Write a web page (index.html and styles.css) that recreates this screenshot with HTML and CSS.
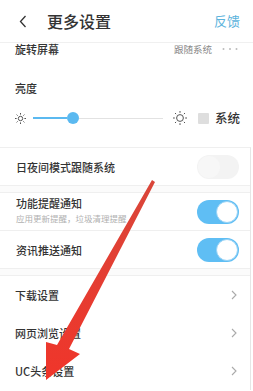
FILE: index.html
```html
<!DOCTYPE html>
<html>
    <head>
        <meta charset="utf-8">
        <title>更多设置</title>
        <meta name="viewport" content="width=device-width, initial-scale=1.0" />
        <link rel="stylesheet" href="styles.css">
    </head>
    <body>
        <div class="page">
            <div class="topbar">
                <span class="back">
                    <svg width="8" height="13" viewBox="0 0 8 13"><polyline points="6.5,1 1.5,6.5 6.5,12" fill="none" stroke="#333" stroke-width="1.3"/></svg>
                </span>
                <span class="title">更多设置</span>
                <span class="feedback">反馈</span>
            </div>

            <div class="rotate">
                <span class="label">旋转屏幕</span>
                <span class="value">跟随系统</span>
                <svg class="more" width="16" height="12" viewBox="0 0 16 12">
                    <circle cx="1.5" cy="6" r="1" fill="#bbb"/>
                    <circle cx="8" cy="6" r="1" fill="#bbb"/>
                    <circle cx="14.5" cy="6" r="1" fill="#bbb"/>
                </svg>
            </div>

            <div class="bright">
                <div class="label">亮度</div>
                <div class="slider_row">
                    <svg class="sun_small" width="11" height="11" viewBox="0 0 11 11">
                        <circle cx="5.5" cy="5.5" r="2.2" fill="none" stroke="#555" stroke-width="1"/>
                        <g stroke="#555" stroke-width="1">
                            <line x1="5.5" y1="0" x2="5.5" y2="1.6"/>
                            <line x1="5.5" y1="9.4" x2="5.5" y2="11"/>
                            <line x1="0" y1="5.5" x2="1.6" y2="5.5"/>
                            <line x1="9.4" y1="5.5" x2="11" y2="5.5"/>
                            <line x1="1.6" y1="1.6" x2="2.6" y2="2.6"/>
                            <line x1="8.4" y1="8.4" x2="9.4" y2="9.4"/>
                            <line x1="1.6" y1="9.4" x2="2.6" y2="8.4"/>
                            <line x1="8.4" y1="2.6" x2="9.4" y2="1.6"/>
                        </g>
                    </svg>
                    <div class="track">
                        <div class="fill"></div>
                        <div class="thumb"></div>
                        <div class="rest"></div>
                    </div>
                    <svg class="sun_big" width="14" height="14" viewBox="0 0 14 14">
                        <circle cx="7" cy="7" r="3.4" fill="none" stroke="#555" stroke-width="1"/>
                        <g stroke="#555" stroke-width="1">
                            <line x1="7" y1="0" x2="7" y2="1.8"/>
                            <line x1="7" y1="12.2" x2="7" y2="14"/>
                            <line x1="0" y1="7" x2="1.8" y2="7"/>
                            <line x1="12.2" y1="7" x2="14" y2="7"/>
                            <line x1="2" y1="2" x2="3.1" y2="3.1"/>
                            <line x1="10.9" y1="10.9" x2="12" y2="12"/>
                            <line x1="2" y1="12" x2="3.1" y2="10.9"/>
                            <line x1="10.9" y1="3.1" x2="12" y2="2"/>
                        </g>
                    </svg>
                    <span class="check"></span>
                    <span class="sys">系统</span>
                </div>
            </div>

            <div class="list">
                <div class="row">
                    <span class="label">日夜间模式跟随系统</span>
                    <span class="switch off"><span class="knob"></span></span>
                </div>
                <div class="gap"></div>
                <div class="row">
                    <div class="two_line">
                        <div class="label">功能提醒通知</div>
                        <div class="sub">应用更新提醒，垃圾清理提醒</div>
                    </div>
                    <span class="switch on"><span class="knob"></span></span>
                </div>
                <div class="row">
                    <span class="label">资讯推送通知</span>
                    <span class="switch on"><span class="knob"></span></span>
                </div>
                <div class="gap"></div>
                <div class="row link">
                    <span class="label">下载设置</span>
                    <svg class="chev" width="6" height="10" viewBox="0 0 6 10"><polyline points="1,1 5,5 1,9" fill="none" stroke="#aaa" stroke-width="1.1"/></svg>
                </div>
                <div class="row link">
                    <span class="label">网页浏览设置</span>
                    <svg class="chev" width="6" height="10" viewBox="0 0 6 10"><polyline points="1,1 5,5 1,9" fill="none" stroke="#aaa" stroke-width="1.1"/></svg>
                </div>
                <div class="row link">
                    <span class="label">UC头条设置</span>
                    <svg class="chev" width="6" height="10" viewBox="0 0 6 10"><polyline points="1,1 5,5 1,9" fill="none" stroke="#aaa" stroke-width="1.1"/></svg>
                </div>
            </div>

            <!-- red arrow drawn over the list -->
            <svg class="arrow" width="253" height="391" viewBox="0 0 253 391">
                <defs>
                    <linearGradient id="red" x1="0" y1="0" x2="0" y2="1">
                        <stop offset="0" stop-color="#d9463a"/>
                        <stop offset="1" stop-color="#f0352a"/>
                    </linearGradient>
                </defs>
                <polygon points="152,180 155,182 69,349 80,354 46,380 46,342 57,345" fill="url(#red)"/>
            </svg>
        </div>
    </body>
</html>
```

FILE: styles.css
```css
body {
    margin: 0;
    background: #fff;
    font-family: "Noto Sans CJK SC", "Noto Sans", sans-serif;
    color: #333;
}
.page {
    position: relative;
    width: 253px;
    height: 391px;
    overflow: hidden;
}
.topbar {
    display: flex;
    align-items: center;
    height: 42px;
    border-bottom: 1px solid #f0f0f0;
}
.back {
    display: flex;
    margin-left: 19px;
}
.title {
    margin-left: 20px;
    font-size: 16px;
    font-weight: 500;
    line-height: 20px;
    color: #333;
}
.feedback {
    margin-left: auto;
    margin-right: 13px;
    font-size: 13px;
    line-height: 18px;
    color: #5cb3dc;
}
.rotate {
    display: flex;
    align-items: flex-start;
    height: 30px;
    padding: 0 15px 0 15px;
}
.rotate .label {
    font-size: 11px;
    font-weight: 500;
    line-height: 12px;
}
.rotate .value {
    margin-left: auto;
    font-size: 9.5px;
    line-height: 12px;
    color: #888;
}
.rotate .more {
    margin-left: 10px;
}
.bright {
    padding: 8px 0 17px 0;
}
.bright .label {
    padding-left: 15px;
    font-size: 11px;
    font-weight: 500;
    line-height: 14px;
}
.slider_row {
    display: flex;
    align-items: center;
    height: 24px;
    margin-top: 11px;
    padding-left: 15px;
}
.track {
    display: flex;
    align-items: center;
    margin-left: 7px;
    width: 130px;
}
.fill {
    width: 34px;
    height: 1.5px;
    background: #5bb9f0;
}
.thumb {
    width: 12px;
    height: 12px;
    border-radius: 100%;
    background: #5bb9f0;
}
.rest {
    flex: 1;
    height: 1px;
    background: #e2e2e2;
}
.sun_big {
    margin-left: 10px;
}
.check {
    width: 11px;
    height: 11px;
    margin-left: 11px;
    background: #dedede;
    border-radius: 1px;
}
.sys {
    margin-left: 6px;
    font-size: 12.5px;
    font-weight: 500;
    line-height: 16px;
}
.list {
    margin-right: 2px;
    border-top: 1px solid #efefef;
    border-right: 1px solid #e6e6e6;
}
.row {
    display: flex;
    align-items: center;
    height: 37px;
    padding: 0 11px 0 16px;
    border-bottom: 1px solid #efefef;
}
.row .label {
    font-size: 11px;
    font-weight: 500;
    line-height: 14px;
}
.row.link {
    height: 38px;
    border-bottom: none;
    padding-left: 15px;
    padding-right: 13px;
}
.two_line {
    align-self: flex-start;
    padding-top: 3px;
}
.sub {
    margin-top: 3px;
    font-size: 8.5px;
    line-height: 11px;
    color: #b0b0b0;
}
.gap {
    height: 6px;
    background: #fbfbfb;
    border-bottom: 1px solid #efefef;
}
.switch {
    display: flex;
    align-items: center;
    box-sizing: border-box;
    width: 42px;
    height: 24px;
    margin-left: auto;
    border-radius: 12px;
    padding: 1px;
}
.switch.on {
    background: #5fbef4;
    justify-content: flex-end;
}
.switch.off {
    background: #f3f3f3;
    justify-content: flex-start;
}
.knob {
    width: 22px;
    height: 22px;
    box-sizing: border-box;
    border-radius: 100%;
    background: #fff;
}
.switch.on .knob {
    border: 1px solid #9ad3f5;
}
.switch.off .knob {
    background: #f7f7f7;
}
.chev {
    margin-left: auto;
}
.arrow {
    position: absolute;
    left: 0;
    top: 0;
    pointer-events: none;
}
```
